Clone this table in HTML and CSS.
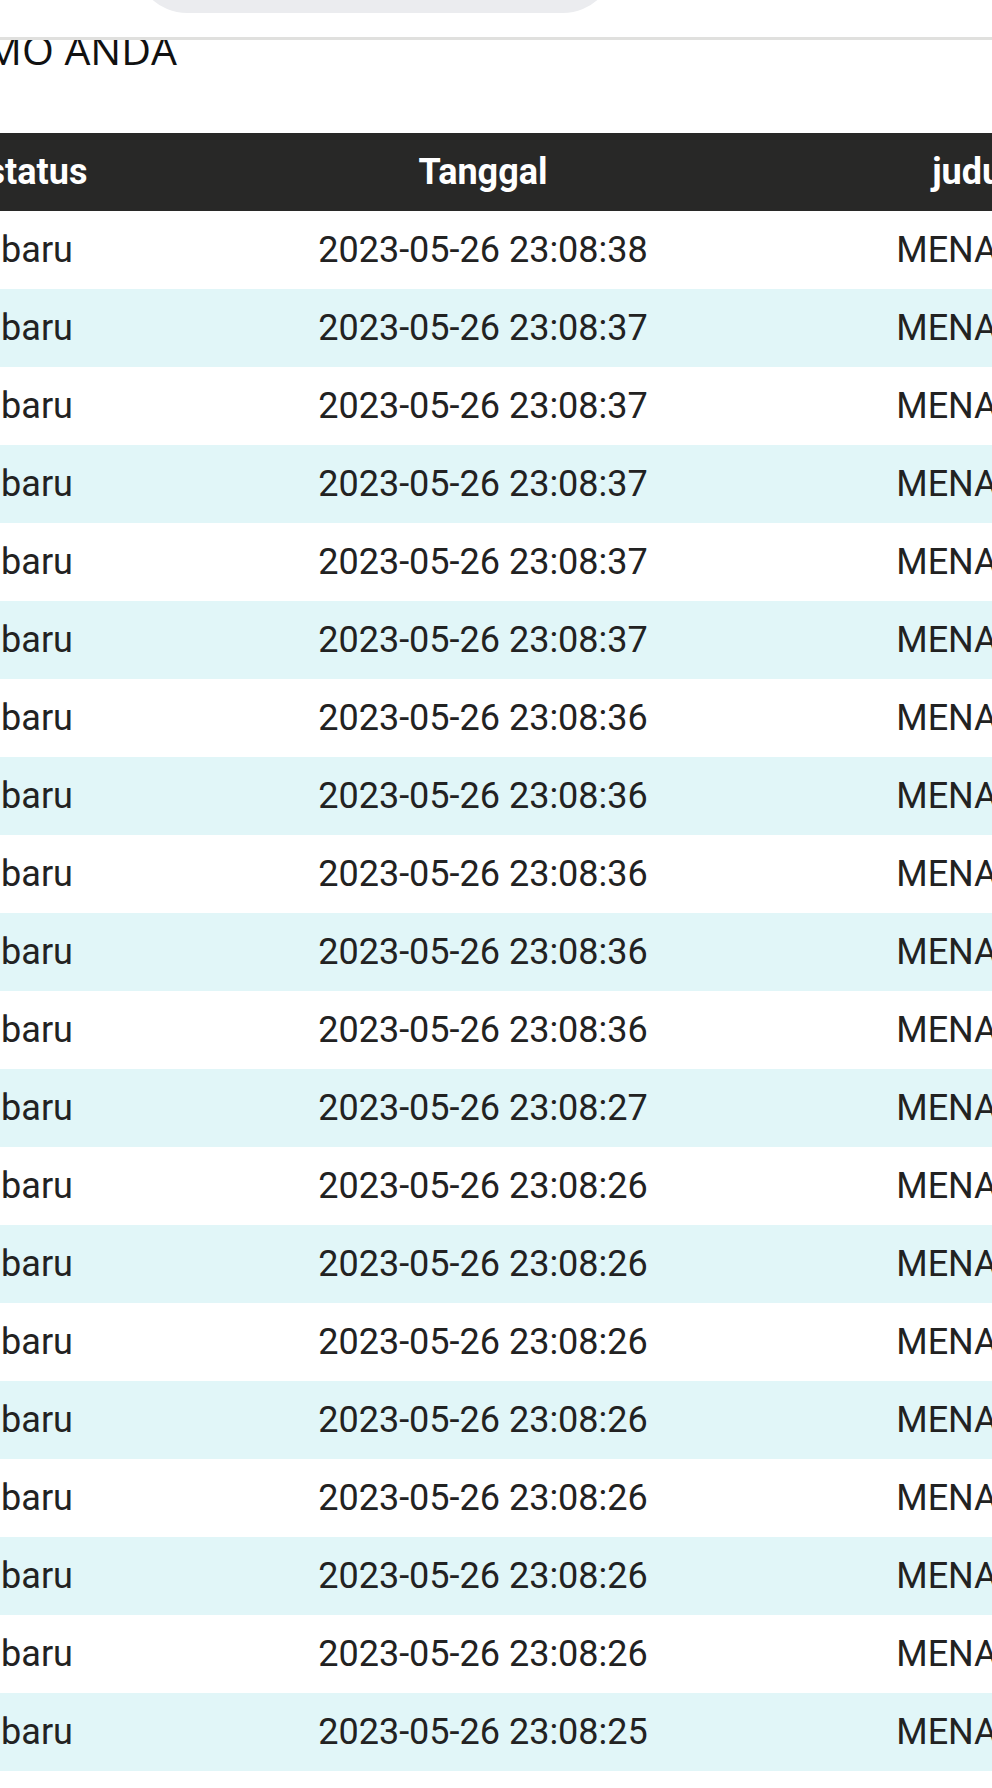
FILE: index.html
```html
<!DOCTYPE html>
<html lang="id">
<head>
<meta charset="utf-8">
<title>Promo Anda</title>
<link rel="stylesheet" href="styles.css">
</head>
<body>
<header class="topbar">
  <div class="search-pill"></div>
</header>
<main class="page">
  <div class="scroller">
    <h1 class="title">MO ANDA</h1>
    <table class="promo-table">
      <colgroup>
        <col class="col-status">
        <col class="col-date">
        <col class="col-title">
      </colgroup>
      <thead>
        <tr><th>status</th><th>Tanggal</th><th>judul</th></tr>
      </thead>
      <tbody>
        <tr><td>baru</td><td>2023-05-26 23:08:38</td><td>MENANG</td></tr>
        <tr><td>baru</td><td>2023-05-26 23:08:37</td><td>MENANG</td></tr>
        <tr><td>baru</td><td>2023-05-26 23:08:37</td><td>MENANG</td></tr>
        <tr><td>baru</td><td>2023-05-26 23:08:37</td><td>MENANG</td></tr>
        <tr><td>baru</td><td>2023-05-26 23:08:37</td><td>MENANG</td></tr>
        <tr><td>baru</td><td>2023-05-26 23:08:37</td><td>MENANG</td></tr>
        <tr><td>baru</td><td>2023-05-26 23:08:36</td><td>MENANG</td></tr>
        <tr><td>baru</td><td>2023-05-26 23:08:36</td><td>MENANG</td></tr>
        <tr><td>baru</td><td>2023-05-26 23:08:36</td><td>MENANG</td></tr>
        <tr><td>baru</td><td>2023-05-26 23:08:36</td><td>MENANG</td></tr>
        <tr><td>baru</td><td>2023-05-26 23:08:36</td><td>MENANG</td></tr>
        <tr><td>baru</td><td>2023-05-26 23:08:27</td><td>MENANG</td></tr>
        <tr><td>baru</td><td>2023-05-26 23:08:26</td><td>MENANG</td></tr>
        <tr><td>baru</td><td>2023-05-26 23:08:26</td><td>MENANG</td></tr>
        <tr><td>baru</td><td>2023-05-26 23:08:26</td><td>MENANG</td></tr>
        <tr><td>baru</td><td>2023-05-26 23:08:26</td><td>MENANG</td></tr>
        <tr><td>baru</td><td>2023-05-26 23:08:26</td><td>MENANG</td></tr>
        <tr><td>baru</td><td>2023-05-26 23:08:26</td><td>MENANG</td></tr>
        <tr><td>baru</td><td>2023-05-26 23:08:26</td><td>MENANG</td></tr>
        <tr><td>baru</td><td>2023-05-26 23:08:25</td><td>MENANG</td></tr>
      </tbody>
    </table>
  </div>
</main>
</body>
</html>
```

FILE: styles.css
```css
html, body {
  margin: 0;
  padding: 0;
  background: #ffffff;
  overflow: hidden;
}

body {
  font-family: Roboto, "Liberation Sans", sans-serif;
  color: #212121;
}

.topbar {
  position: fixed;
  top: 0;
  left: 0;
  right: 0;
  height: 37px;
  background: #ffffff;
  border-bottom: 3px solid #e0e0de;
  display: flex;
  align-items: flex-end;
  overflow: hidden;
  z-index: 10;
}

.search-pill {
  flex: 0 0 480px;
  height: 104px;
  margin-left: 135px;
  margin-bottom: 24.5px;
  border-radius: 52px;
  background: #ebecef;
}

.page {
  padding-top: 21px;
  overflow: hidden;
}

.scroller {
  margin-left: -60px;
  width: 1172px;
}

.title {
  margin: 0;
  padding-left: 45px;
  font-family: "Open Sans", "Noto Sans", sans-serif;
  font-weight: 400;
  font-size: 41px;
  line-height: 56px;
  color: #111111;
  white-space: nowrap;
}

.promo-table {
  margin-top: 56px;
  width: 1172px;
  table-layout: fixed;
  border-collapse: collapse;
  border-spacing: 0;
}

.col-status { width: 194px; }
.col-date { width: 698px; }
.col-title { width: 280px; }

.promo-table th,
.promo-table td {
  height: 78px;
  padding: 0;
  text-align: center;
  vertical-align: middle;
  font-size: 36px;
  line-height: 1;
  white-space: nowrap;
}

.promo-table th {
  background: #282827;
  color: #ffffff;
  font-weight: 700;
}

.promo-table td {
  font-weight: 400;
  color: #222222;
}

.promo-table tbody tr:nth-child(even) td {
  background: #e1f6f8;
}
```
